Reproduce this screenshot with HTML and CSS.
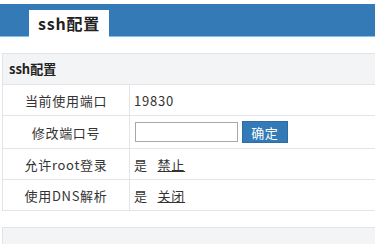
FILE: index.html
```html
<!DOCTYPE html>
<html lang="zh-CN">
<head>
    <meta charset="UTF-8">
    <meta name="viewport" content="width=device-width, initial-scale=1.0">
    <title>ssh配置</title>
    <link rel="stylesheet" href="styles.css">
</head>
<body>

<!-- 顶部标签栏 -->
<div class="topbar">
    <div class="tab">ssh配置</div>
</div>

<!-- ssh 配置面板 -->
<div class="panel">
    <div class="panel-head">ssh配置</div>
    <table class="conf-table">
        <tr>
            <td class="label">当前使用端口</td>
            <td class="value">19830</td>
        </tr>
        <tr class="tall">
            <td class="label">修改端口号</td>
            <td class="value">
                <input type="text" class="port-input">
                <button type="button" class="btn">确定</button>
            </td>
        </tr>
        <tr>
            <td class="label">允许root登录</td>
            <td class="value">是 <a href="#" class="link">禁止</a></td>
        </tr>
        <tr>
            <td class="label">使用DNS解析</td>
            <td class="value">是 <a href="#" class="link">关闭</a></td>
        </tr>
    </table>
</div>

<!-- 下一个面板 -->
<div class="panel panel-next">
    <div class="panel-head"></div>
</div>

</body>
</html>
```

FILE: styles.css
```css
body {
    margin: 0;
    padding-top: 4px;
    overflow: hidden;
    font-family: "Noto Sans CJK SC", "Noto Sans", sans-serif;
    font-size: 13px;
    color: #333;
    background: #fff;
}

/* 顶部标签栏 */
.topbar {
    display: flex;
    align-items: flex-end;
    height: 32px;
    background-color: #337ab7;
    border-bottom: 1px solid #7cc4ea;
    padding-left: 29px;
}

.tab {
    width: 80px;
    height: 27px;
    margin-bottom: -1px;
    background: #fff;
    font-size: 16px;
    font-weight: bold;
    line-height: 26px;
    text-align: center;
    letter-spacing: 0.8px;
    color: #222;
}

/* 面板 */
.panel {
    margin: 16px -20px 0 2px;
    border: 1px solid #e3e4e7;
}

.panel-head {
    height: 30px;
    line-height: 30px;
    padding-left: 6px;
    background: #f3f4f6;
    font-weight: bold;
    color: #222;
}

.panel-next {
    height: 40px;
    background: #f3f4f6;
}

/* 表格 */
.conf-table {
    width: 100%;
    border-collapse: collapse;
}

.conf-table td {
    height: 30px;
    border-top: 1px solid #e3e4e7;
    padding: 0;
}

.conf-table tr.tall td {
    height: 32px;
}

.conf-table .label {
    width: 126px;
    text-align: center;
    border-right: 1px solid #e3e4e7;
    letter-spacing: 0.7px;
}

.conf-table .value {
    padding-left: 4px;
    letter-spacing: 0.8px;
}

.port-input {
    width: 99px;
    height: 16px;
    padding: 1px;
    border: 1px solid #a9a9a9;
    margin: 0 0 0 1px;
    vertical-align: middle;
}

.btn {
    width: 46px;
    height: 22px;
    margin-left: 0;
    padding: 0;
    background: #337ab7;
    border: 1px solid #2e6da4;
    color: #fff;
    font-family: inherit;
    font-size: 13px;
    letter-spacing: 0.5px;
    vertical-align: middle;
}

.link {
    color: #333;
    text-decoration: underline;
    margin-left: 6px;
}
```
